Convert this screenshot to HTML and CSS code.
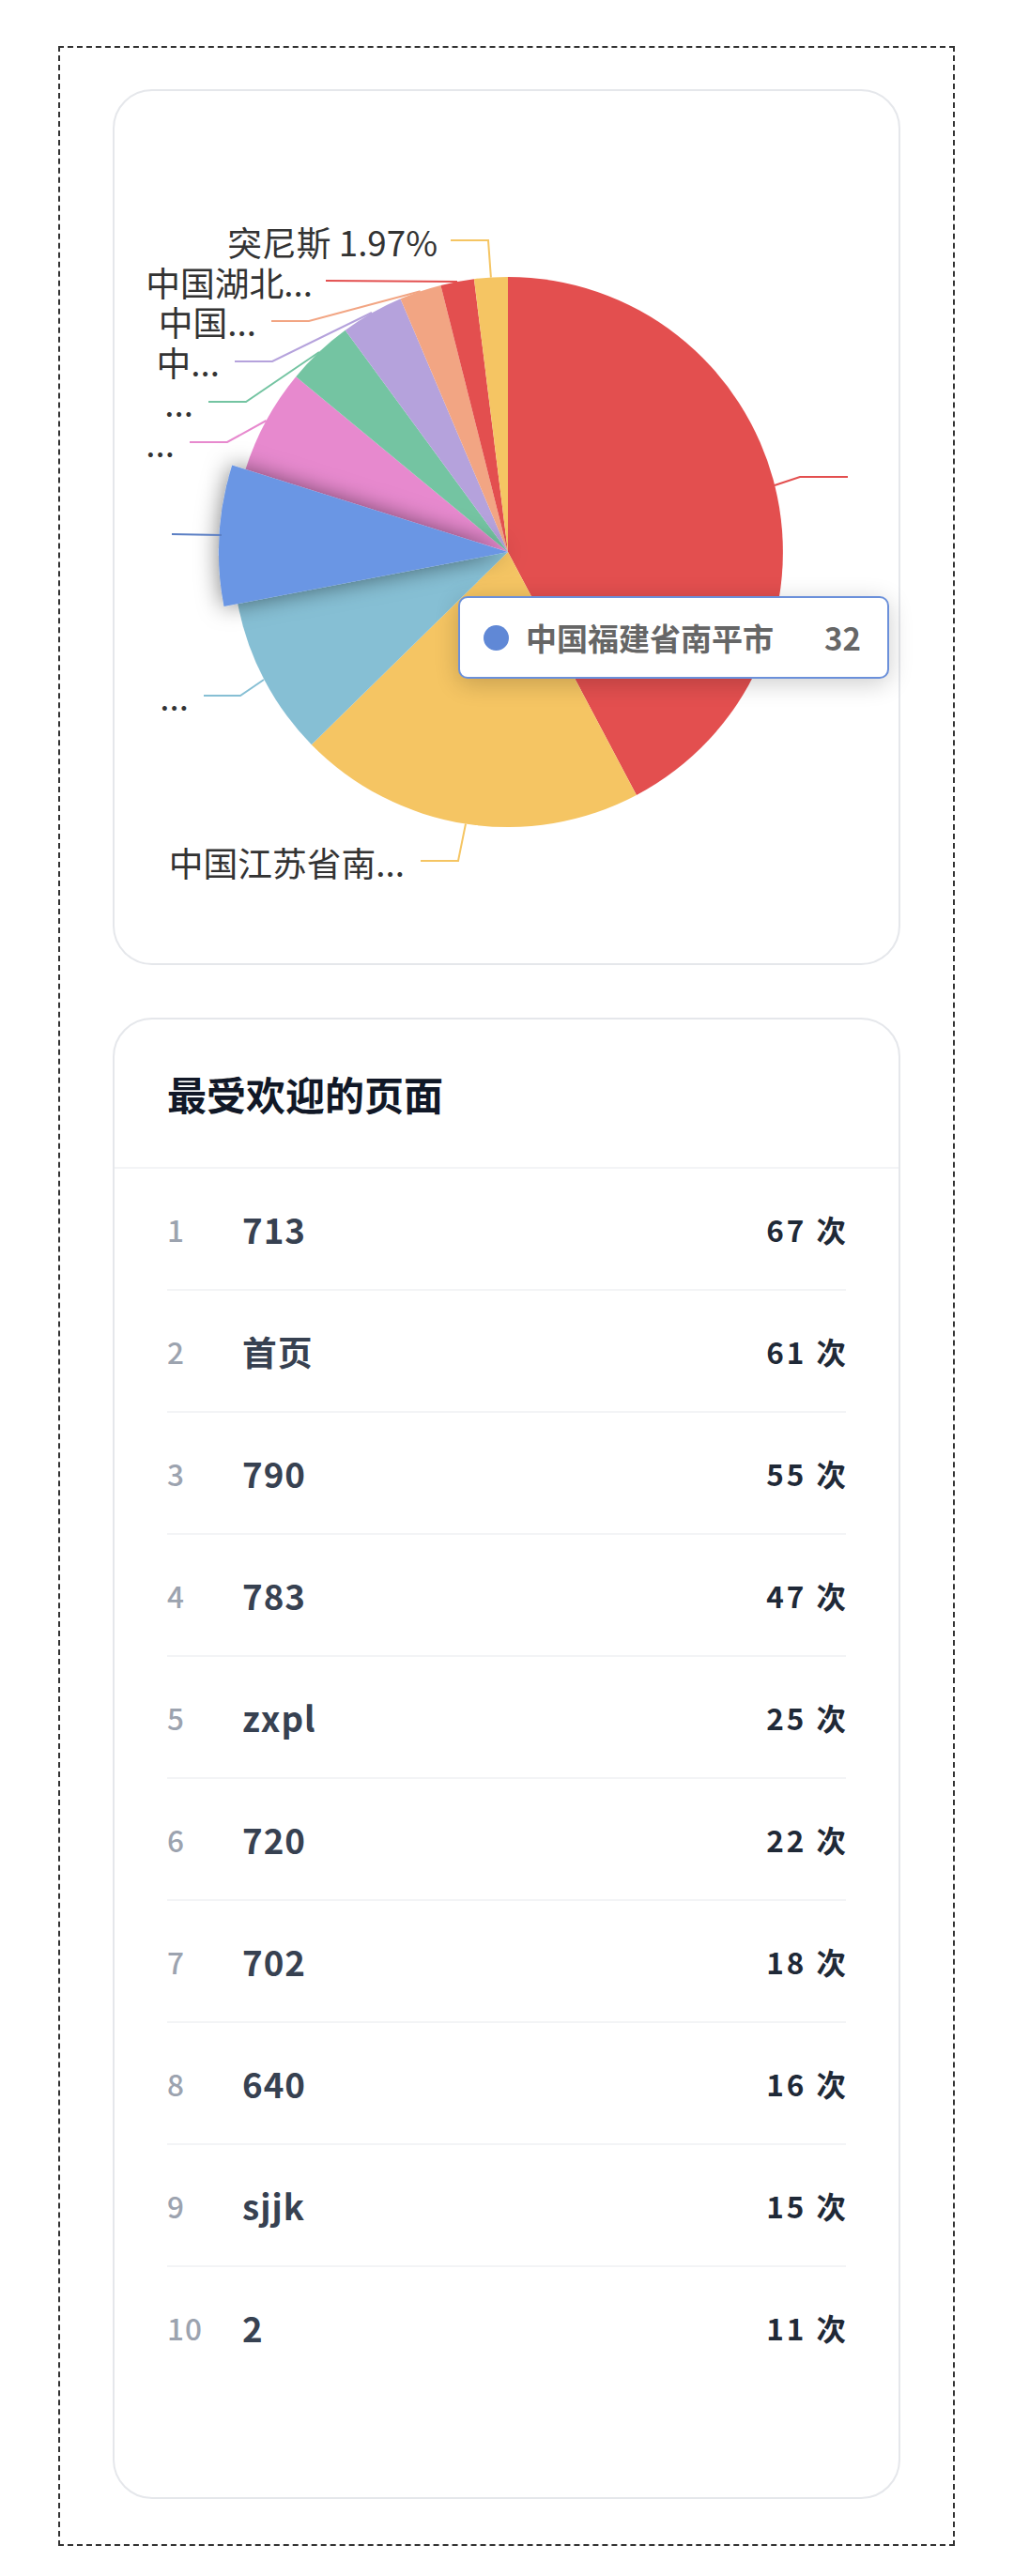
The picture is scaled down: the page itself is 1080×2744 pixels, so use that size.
FILE: index.html
```html
<!DOCTYPE html>
<html lang="zh-CN">
<head>
<meta charset="utf-8">
<title>统计</title>
<link rel="stylesheet" href="styles.css">
</head>
<body>
<div class="frame">
  <section class="card chart-card">
    <svg class="pie" width="835" height="929" viewBox="0 0 835 929" xmlns="http://www.w3.org/2000/svg">
      <defs>
        <filter id="sh" x="-60%" y="-60%" width="220%" height="220%">
          <feDropShadow dx="0" dy="0" stdDeviation="12" flood-color="#000" flood-opacity="0.5"/>
        </filter>
      </defs>
      <g transform="translate(-122 -97)">
        <path fill="#e34f4f" d="M541 588 L541 295 A293 293 0 0 1 677.9 847 Z"/>
        <path fill="#f5c563" d="M541 588 L677.9 847 A293 293 0 0 1 331.8 793.2 Z"/>
        <path fill="#86bfd4" d="M541 588 L331.8 793.2 A293 293 0 0 1 253.2 643.1 Z"/>
        <path fill="#e789ce" d="M541 588 L261.5 500 A293 293 0 0 1 315.2 401.2 Z"/>
        <path fill="#74c4a2" d="M541 588 L315.2 401.2 A293 293 0 0 1 367.7 351.8 Z"/>
        <path fill="#b5a2dc" d="M541 588 L367.7 351.8 A293 293 0 0 1 426.5 318.3 Z"/>
        <path fill="#f2a583" d="M541 588 L426.5 318.3 A293 293 0 0 1 469.4 303.9 Z"/>
        <path fill="#e34f4f" d="M541 588 L469.4 303.9 A293 293 0 0 1 504.9 297.2 Z"/>
        <path fill="#f5c563" d="M541 588 L504.9 297.2 A293 293 0 0 1 541 295 Z"/>
        <path fill="#6a96e4" filter="url(#sh)" d="M541 588 L238.5 645.9 A308 308 0 0 1 247.2 495.5 Z"/>

        <g class="leaders" fill="none" stroke-width="2">
          <polyline stroke="#f5c563" points="522.9,295.6 520,256 480,256"/>
          <polyline stroke="#e34f4f" points="487,300 347,299"/>
          <polyline stroke="#f2a583" points="447.7,310.2 329,342 289,342"/>
          <polyline stroke="#b5a2dc" points="396,333 290,385 250,385"/>
          <polyline stroke="#74c4a2" points="340,375 262,428 222,428"/>
          <polyline stroke="#e789ce" points="283.6,448 242,471 202,471"/>
          <polyline stroke="#5b7fc4" points="236,570 183,569"/>
          <polyline stroke="#86bfd4" points="281,724 256,741 217,741"/>
          <polyline stroke="#f5c563" points="496,877.5 488,917 448,917"/>
          <polyline stroke="#e34f4f" points="825,517 852,508 903,508"/>
        </g>

        <g class="labels">
          <text x="466" y="257">突尼斯 1.97%</text>
          <text x="333" y="300">中国湖北...</text>
          <text x="273" y="342">中国...</text>
          <text x="234" y="385">中...</text>
          <text x="206" y="428">...</text>
          <text x="186" y="471">...</text>
          <text x="201" y="741">...</text>
          <text x="431" y="918">中国江苏省南...</text>
        </g>
      </g>
    </svg>
    <div class="tooltip">
      <span class="tt-dot"></span>
      <span class="tt-name">中国福建省南平市</span>
      <span class="tt-val">32</span>
    </div>
  </section>

  <section class="card list-card">
    <h2 class="list-title">最受欢迎的页面</h2>
    <ol class="rows">
      <li class="row"><span class="rank">1</span><span class="name">713</span><span class="count">67 次</span></li>
      <li class="row"><span class="rank">2</span><span class="name">首页</span><span class="count">61 次</span></li>
      <li class="row"><span class="rank">3</span><span class="name">790</span><span class="count">55 次</span></li>
      <li class="row"><span class="rank">4</span><span class="name">783</span><span class="count">47 次</span></li>
      <li class="row"><span class="rank">5</span><span class="name">zxpl</span><span class="count">25 次</span></li>
      <li class="row"><span class="rank">6</span><span class="name">720</span><span class="count">22 次</span></li>
      <li class="row"><span class="rank">7</span><span class="name">702</span><span class="count">18 次</span></li>
      <li class="row"><span class="rank">8</span><span class="name">640</span><span class="count">16 次</span></li>
      <li class="row"><span class="rank">9</span><span class="name">sjjk</span><span class="count">15 次</span></li>
      <li class="row"><span class="rank">10</span><span class="name">2</span><span class="count">11 次</span></li>
    </ol>
  </section>
</div>
</body>
</html>
```
FILE: styles.css
```css
* { box-sizing: border-box; }

html, body {
  margin: 0;
  padding: 0;
  background: #fff;
}

body {
  padding: 49px 63px 32px 62px;
  font-family: "Noto Sans CJK SC", "Noto Sans", sans-serif;
}

.frame {
  border: 2px dashed #333;
  padding: 44px 56px 48px;
  display: flex;
  flex-direction: column;
  gap: 56px;
}

.card {
  background: #fff;
  border: 2px solid #e5e7eb;
  border-radius: 42px;
}

.chart-card {
  position: relative;
  height: 933px;
}

.pie {
  display: block;
  overflow: visible;
}

.labels text {
  font-family: "Noto Sans CJK SC", "Noto Sans", sans-serif;
  font-size: 36.75px;
  fill: #333;
  text-anchor: end;
  dominant-baseline: central;
}

.tooltip {
  position: absolute;
  left: 366px;
  top: 538px;
  width: 459px;
  height: 88px;
  border: 2px solid #6b90da;
  border-radius: 10px;
  background: #fff;
  box-shadow: 0 5px 26px rgba(0, 0, 0, 0.2);
  display: flex;
  align-items: center;
  padding: 0 28px 0 25px;
  font-size: 33px;
  font-weight: 700;
  color: #666;
  line-height: 1;
}

.tt-dot {
  width: 27px;
  height: 27px;
  border-radius: 50%;
  background: #6088d6;
  margin-right: 18px;
  flex: none;
}

.tt-name { flex: 1; }

.tt-val { flex: none; }

.list-card {
  display: flex;
  flex-direction: column;
}

.list-title {
  margin: 0;
  height: 159px;
  padding: 0 56px;
  display: flex;
  align-items: center;
  font-size: 42px;
  font-weight: 700;
  color: #111827;
  border-bottom: 2px solid #f3f4f6;
}

.rows {
  list-style: none;
  margin: 0;
  padding: 0 56px 117px;
}

.row {
  height: 130px;
  display: flex;
  align-items: center;
  border-bottom: 2px solid #f3f4f6;
}

.row:last-child {
  height: 128px;
  border-bottom: none;
}

.rank {
  width: 80px;
  flex: none;
  font-size: 31.5px;
  font-weight: 500;
  color: #9ca3af;
  letter-spacing: 1px;
}

.name {
  flex: 1;
  font-size: 36.75px;
  font-weight: 600;
  color: #374151;
  letter-spacing: 1px;
}

.count {
  flex: none;
  font-size: 31.5px;
  font-weight: 600;
  color: #1f2937;
  letter-spacing: 3px;
  margin-right: -3px;
}
```
